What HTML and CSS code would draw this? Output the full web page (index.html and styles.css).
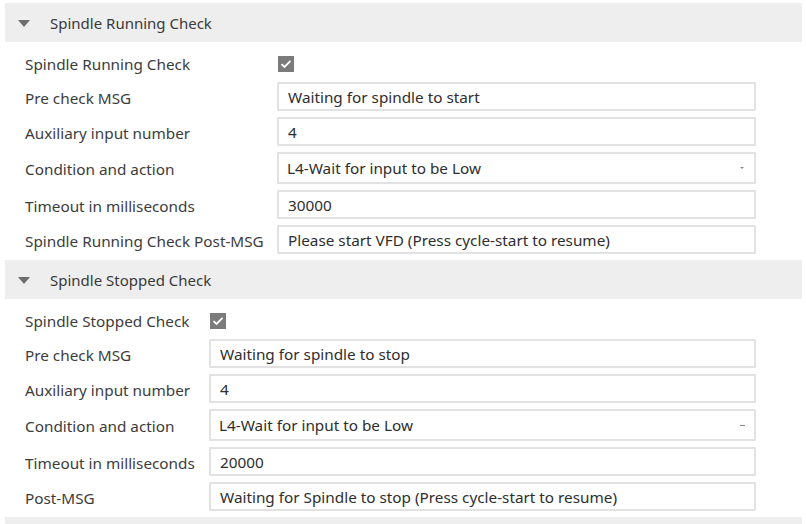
FILE: index.html
```html
<!DOCTYPE html>
<html>
<head>
<meta charset="utf-8">
<link rel="stylesheet" href="styles.css">
</head>
<body>
<div class="panel">
  <div class="section">
    <div class="header"><span class="tri"></span><span class="htitle">Spindle Running Check</span></div>
    <div class="grid g1">
      <div class="label lcheck">Spindle Running Check</div>
      <div class="cbwrap"><span class="cb"><svg width="12" height="10" viewBox="0 0 12 10"><path d="M1.5 5.2 L4.5 8 L10.5 1.8" fill="none" stroke="#fff" stroke-width="1.8"/></svg></span></div>
      <div class="label">Pre check MSG</div>
      <div class="field">Waiting for spindle to start</div>
      <div class="label">Auxiliary input number</div>
      <div class="field">4</div>
      <div class="label">Condition and action</div>
      <div class="field select">L4-Wait for input to be Low<span class="arrow"></span></div>
      <div class="label">Timeout in milliseconds</div>
      <div class="field">30000</div>
      <div class="label">Spindle Running Check Post-MSG</div>
      <div class="field">Please start VFD (Press cycle-start to resume)</div>
    </div>
  </div>
  <div class="section">
    <div class="header"><span class="tri"></span><span class="htitle">Spindle Stopped Check</span></div>
    <div class="grid g2">
      <div class="label lcheck">Spindle Stopped Check</div>
      <div class="cbwrap"><span class="cb"><svg width="12" height="10" viewBox="0 0 12 10"><path d="M1.5 5.2 L4.5 8 L10.5 1.8" fill="none" stroke="#fff" stroke-width="1.8"/></svg></span></div>
      <div class="label">Pre check MSG</div>
      <div class="field">Waiting for spindle to stop</div>
      <div class="label">Auxiliary input number</div>
      <div class="field">4</div>
      <div class="label">Condition and action</div>
      <div class="field select">L4-Wait for input to be Low<span class="dash"></span></div>
      <div class="label">Timeout in milliseconds</div>
      <div class="field">20000</div>
      <div class="label">Post-MSG</div>
      <div class="field">Waiting for Spindle to stop (Press cycle-start to resume)</div>
    </div>
  </div>
  <div class="header footer"></div>
</div>
</body>
</html>
```

FILE: styles.css
```css
html, body {
  margin: 0;
  padding: 0;
  background: #fff;
}
body {
  font-family: "Noto Sans", "Open Sans", sans-serif;
  color: #3a3a3a;
  width: 806px;
  height: 524px;
  overflow: hidden;
}
.panel {
  padding: 3px 4px 0 5px;
}
.header {
  height: 39px;
  background: #eeeeee;
  display: flex;
  align-items: center;
}
.tri {
  width: 0;
  height: 0;
  border-left: 6.5px solid transparent;
  border-right: 6.5px solid transparent;
  border-top: 7px solid #6e6e6e;
  margin-left: 13px;
  margin-top: 1px;
}
.htitle {
  margin-left: 20px;
  font-size: 15px;
  color: #3a3a3a;
}
.grid {
  display: grid;
  column-gap: 12px;
  row-gap: 6px;
  align-items: center;
  padding: 10px 0 6px 20px;
  width: 731px;
}
.g1 { grid-template-columns: 240px 479px; }
.g2 { grid-template-columns: 172px 547px; }
.label {
  font-size: 15.3px;
  white-space: nowrap;
  color: #3c3c3c;
  padding-top: 2px;
}
.lcheck { padding-top: 0; }
.cbwrap {
  display: flex;
  align-items: center;
  height: 24px;
  padding-left: 1px;
}
.cb {
  width: 16px;
  height: 16px;
  background: #7b7b7b;
  display: flex;
  align-items: center;
  justify-content: center;
}
.field {
  box-sizing: border-box;
  height: 29px;
  border: 2px solid #e2e2e2;
  border-radius: 1px;
  font-size: 15.3px;
  color: #2e2e2e;
  display: flex;
  align-items: center;
  padding-left: 9px;
  white-space: nowrap;
  position: relative;
}
.select {
  height: 32px;
  padding-left: 8px;
}
.arrow {
  position: absolute;
  right: 10px;
  top: 13px;
  border-left: 2px solid transparent;
  border-right: 2px solid transparent;
  border-top: 2px solid #888;
}
.dash {
  position: absolute;
  right: 9px;
  top: 14px;
  width: 5px;
  height: 1px;
  background: #888;
}
.footer {
  height: 10px;
  margin-top: 0;
}
```
